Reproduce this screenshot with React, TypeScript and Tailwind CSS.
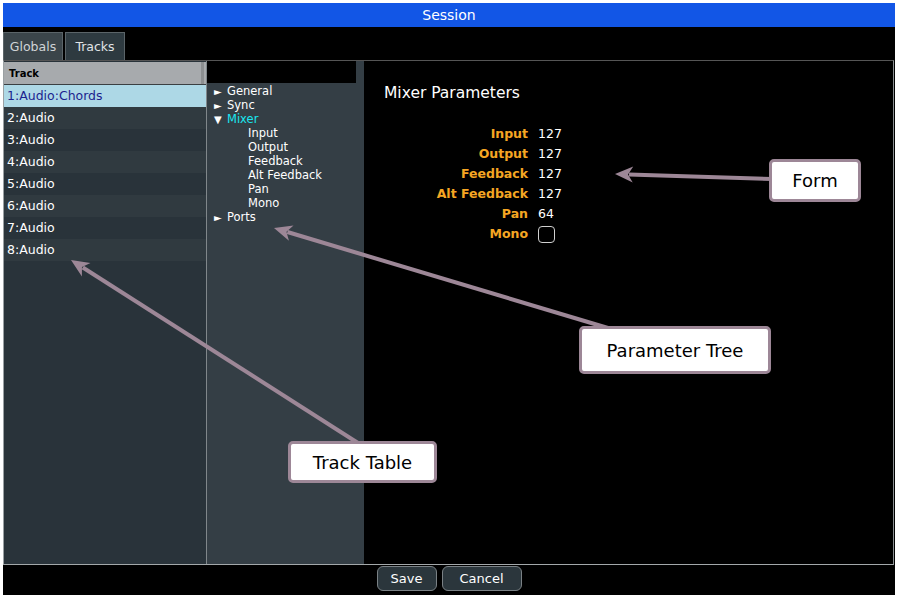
import React from 'react';

const tracks = ['1:Audio:Chords', '2:Audio', '3:Audio', '4:Audio', '5:Audio', '6:Audio', '7:Audio', '8:Audio'];

const mixerFields = [
  { label: 'Input', value: '127' },
  { label: 'Output', value: '127' },
  { label: 'Feedback', value: '127' },
  { label: 'Alt Feedback', value: '127' },
  { label: 'Pan', value: '64' },
];

const ui = { fontFamily: '"DejaVu Sans", Verdana, sans-serif' };

function Arrow({ x1, y1, x2, y2 }: { x1: number; y1: number; x2: number; y2: number }) {
  // line from box to tip, with a filled head at the tip
  const a = Math.atan2(y2 - y1, x2 - x1);
  const len = 18;
  const w = 8;
  const bx = x2 - len * Math.cos(a);
  const by = y2 - len * Math.sin(a);
  const px = -Math.sin(a) * w;
  const py = Math.cos(a) * w;
  return (
    <g>
      <line x1={x1} y1={y1} x2={bx + 4 * Math.cos(a)} y2={by + 4 * Math.sin(a)} stroke="#9d8797" strokeWidth={4} />
      <polygon points={`${x2},${y2} ${bx + px},${by + py} ${bx + 5 * Math.cos(a)},${by + 5 * Math.sin(a)} ${bx - px},${by - py}`} fill="#9d8797" />
    </g>
  );
}

function Callout({ className, children }: { className: string; children: React.ReactNode }) {
  return (
    <div
      className={`absolute flex items-center justify-center bg-white border-[3px] border-[#9d8797] rounded-[5px] text-[18px] text-black ${className}`}
      style={ui}
    >
      {children}
    </div>
  );
}

function TreeItem({ label, open, active }: { label: string; open?: boolean; active?: boolean }) {
  return (
    <div className="flex items-center h-[14px]">
      <span className="w-[13px] text-[10px] text-white leading-none">{open ? '▼' : '►'}</span>
      <span className={active ? 'text-[#19e6f0]' : 'text-white'}>{label}</span>
    </div>
  );
}

export default function App() {
  return (
    <div className="relative w-[898px] h-[598px] bg-white p-[3px]" style={ui}>
      <div className="flex flex-col h-full bg-black">
        {/* Title */}
        <div className="h-[24px] bg-[#1256e6] text-white text-[14px] flex items-center justify-center">Session</div>

        {/* Tabs */}
        <div className="flex gap-[2px] mt-[5px] h-[28px] text-[12.5px]">
          <div className="w-[60px] flex items-center justify-center pt-px bg-[#3b454a] text-[#d0d4d6] border border-[#5b6468] border-b-0">Globals</div>
          <div className="w-[60px] flex items-center justify-center pt-px bg-[#2e3a40] text-[#e0e4e6] border border-[#5b6468] border-b-0">Tracks</div>
        </div>

        {/* Main panel */}
        <div className="flex h-[505px] border border-[#555] border-r-[#8a8f92] border-b-[#a3a8aa] border-l-[#9aa0a3] mr-[1px]">
          {/* Track table */}
          <div className="w-[203px] flex flex-col bg-[#29333a] border-r border-[#80878b]">
            <div className="h-[23px] mt-[1px] bg-[#a7aaad] border-b border-[#3a3f42] flex items-center pl-[5px] text-[10px] font-bold text-black">
              <span className="flex-1">Track</span>
              <span className="w-[3px] h-full bg-[#8c8f91] mr-[2px]" />
            </div>
            {tracks.map((t, i) => (
              <div
                key={t}
                className={`h-[22px] flex items-center pl-[3px] text-[12.5px] ${
                  i === 0 ? 'bg-[#add8e6] text-[#1c1f8e]' : i % 2 === 1 ? 'bg-[#303a40] text-white' : 'bg-[#29333a] text-white'
                }`}
              >
                {t}
              </div>
            ))}
          </div>

          {/* Parameter tree */}
          <div className="w-[157px] flex flex-col bg-[#343e45] text-[11.5px]">
            <div className="w-[149px] h-[22px] bg-black" />
            <div className="pl-[7px] pt-[2px]">
              <TreeItem label="General" />
              <TreeItem label="Sync" />
              <TreeItem label="Mixer" open active />
              {['Input', 'Output', 'Feedback', 'Alt Feedback', 'Pan', 'Mono'].map((c) => (
                <div key={c} className="h-[14px] flex items-center pl-[34px] text-white">{c}</div>
              ))}
              <TreeItem label="Ports" />
            </div>
          </div>

          {/* Form */}
          <div className="flex-1 bg-black pl-[20px] pt-[22px]">
            <div className="text-[15.5px] text-white h-[22px] flex items-center">Mixer Parameters</div>
            <div className="mt-[19px] grid grid-cols-[144px_auto] gap-x-[10px] text-[12.5px]">
              {mixerFields.map((f) => (
                <React.Fragment key={f.label}>
                  <div className="h-[20px] flex items-center justify-end font-bold text-[#f5a623]">{f.label}</div>
                  <div className="h-[20px] flex items-center text-white">{f.value}</div>
                </React.Fragment>
              ))}
              <div className="h-[20px] flex items-center justify-end font-bold text-[#f5a623]">Mono</div>
              <div className="h-[20px] flex items-center">
                <span className="w-[17px] h-[17px] rounded-[4px] border border-[#d0d0d0] bg-black" />
              </div>
            </div>
          </div>
        </div>

        {/* Buttons */}
        <div className="flex-1 flex justify-center items-start pt-px gap-[5px] text-[13px]">
          <button className="w-[60px] h-[25px] rounded-[6px] bg-[#2b363c] border border-[#7a8185] text-white">Save</button>
          <button className="w-[80px] h-[25px] rounded-[6px] bg-[#2b363c] border border-[#7a8185] text-white">Cancel</button>
        </div>
      </div>

      {/* Annotations */}
      <svg className="absolute inset-0 pointer-events-none" width={898} height={598}>
        <Arrow x1={772} y1={179} x2={615} y2={174} />
        <Arrow x1={608} y1={328} x2={274} y2={228} />
        <Arrow x1={358} y1={443} x2={71} y2={260} />
      </svg>
      <Callout className="left-[769px] top-[159px] w-[92px] h-[43px]">Form</Callout>
      <Callout className="left-[579px] top-[326px] w-[192px] h-[48px]">Parameter Tree</Callout>
      <Callout className="left-[288px] top-[441px] w-[149px] h-[42px]">Track Table</Callout>
    </div>
  );
}
